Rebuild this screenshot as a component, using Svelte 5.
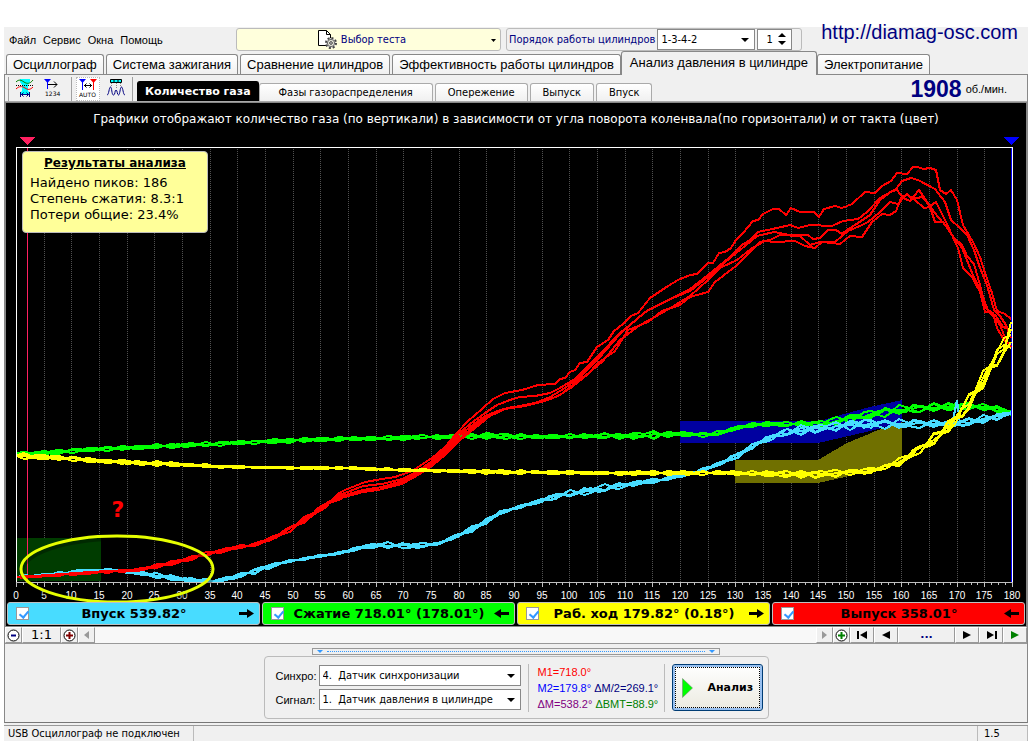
<script>
  let tabs = [
    'Осциллограф',
    'Система зажигания',
    'Сравнение цилиндров',
    'Эффективность работы цилиндров',
    'Анализ давления в цилиндре',
    'Электропитание',
  ];
  let views = ['Количество газа', 'Фазы газораспределения', 'Опережение', 'Выпуск', 'Впуск'];

  let activeTab = $state(4);
  let activeView = $state(0);
  let cylinder = $state(1);

  let strokes = $state([
    { name: 'Впуск 539.82°', color: 'cyan', back: false, on: true },
    { name: 'Сжатие 718.01° (178.01°)', color: 'green', back: true, on: true },
    { name: 'Раб. ход 179.82° (0.18°)', color: 'yellow', back: false, on: true },
    { name: 'Выпуск 358.01°', color: 'red', back: true, on: true },
  ]);

  // plot area inside the svg
  const left = 16;
  const right = 1012;
  const top = 147;
  const bottom = 583;
  const xOf = (deg) => Math.round(left + (deg * (right - left)) / 180);

  const majors = Array.from({ length: 37 }, (_, i) => i * 5);
  const minors = Array.from({ length: 144 }, (_, i) => i * 1.25).filter((d) => d % 5);

  // [x, y, spread] of the middle of each bundle
  const intake = [
    [17, 577, 1], [45, 575, 1], [80, 571, 1], [110, 570, 1], [140, 573, 2], [165, 577, 3],
    [190, 580, 2], [215, 581, 1], [235, 577, 2], [260, 569, 3], [290, 561, 1], [320, 556, 1],
    [345, 552, 1], [367, 546, 2], [385, 545, 3], [420, 546, 3], [440, 543, 1], [455, 537, 2],
    [480, 525, 3], [500, 513, 2], [515, 508, 1], [540, 501, 2], [560, 495, 3], [600, 489, 4],
    [625, 485, 3], [660, 480, 2], [690, 474, 1], [720, 464, 2], [740, 454, 3], [760, 442, 2],
    [780, 434, 3], [800, 430, 5], [830, 427, 4], [860, 424, 5], [900, 424, 5], [930, 424, 4],
    [950, 424, 3], [970, 422, 4], [985, 419, 4], [1000, 416, 3], [1011, 413, 1],
  ];
  const compression = [
    [17, 453, 1], [43, 453, 2], [100, 449, 2], [167, 446, 2], [233, 443, 2], [300, 440, 2],
    [345, 439, 2], [430, 437, 2], [495, 436, 3], [540, 437, 2], [580, 436, 2], [625, 436, 3],
    [650, 435, 4], [680, 434, 2], [708, 435, 2], [720, 433, 2], [740, 427, 2], [765, 424, 2],
    [790, 424, 2], [820, 424, 4], [840, 420, 4], [860, 416, 4], [880, 413, 5], [900, 410, 5],
    [920, 408, 4], [945, 407, 4], [960, 406, 4], [980, 407, 3], [1000, 409, 3], [1011, 413, 2],
  ];
  const power = [
    [17, 456, 3], [60, 458, 2], [100, 461, 2], [167, 464, 2], [233, 467, 1], [300, 468, 1],
    [345, 468, 1], [400, 470, 1], [500, 472, 2], [600, 473, 1], [640, 473, 2], [690, 473, 2],
    [740, 473, 2], [770, 474, 3], [820, 474, 4], [850, 472, 3], [870, 471, 3], [885, 467, 2],
    [900, 462, 4], [915, 452, 4], [930, 443, 6], [945, 430, 6], [957, 418, 6], [970, 401, 8],
    [980, 385, 9], [990, 368, 9], [1000, 352, 10], [1011, 335, 13],
  ];
  const exhaust = [
    [17, 577, 1], [43, 576, 1], [70, 574, 1], [100, 572, 1], [137, 570, 1], [160, 566, 2],
    [180, 561, 2], [207, 554, 2], [233, 548, 2], [253, 545, 2], [273, 538, 2], [290, 529, 3],
    [307, 518, 3], [327, 504, 3], [345, 493, 3],
  ];

  const exhaustTails = [
    '345,490 365,482 382,479 395,477 412,471 432,458 445,447 455,435 468,421 482,409 493,399 505,393 522,390 538,385 555,384 560,379 565,378 570,372 575,370 580,363 587,362 597,347 608,340 614,331 623,324 631,316 638,313 650,298 668,286 678,280 690,275 697,274 708,263 713,263 719,253 725,252 731,248 736,240 743,233 753,221 758,220 763,214 773,209 779,209 786,215 791,208 800,212 814,212 819,217 824,209 835,206 842,208 852,204 865,192 875,193 882,186 891,181 897,173 907,174 913,167 918,167 923,169 930,168 936,170 940,190 946,194 951,190 957,200 963,225 973,242 980,257 985,273 992,293 997,311 1005,314 1011,319',
    '345,493 363,486 382,484 402,479 418,471 432,461 445,449 455,437 470,424 485,413 497,405 510,400 520,397 535,396 550,393 558,389 575,379 598,356 620,333 648,310 665,302 690,289 708,275 730,257 742,245 750,240 758,232 777,228 790,225 798,228 810,225 832,226 843,221 858,219 867,212 880,198 896,189 902,181 911,178 918,180 935,189 945,202 951,220 960,228 967,235 974,250 980,268 987,285 994,310 1000,316 1006,325 1011,338',
    '345,495 363,490 382,487 402,481 418,473 432,463 445,451 457,438 470,427 485,416 500,410 515,407 535,403 550,397 565,388 580,377 600,357 620,334 645,312 668,300 690,291 708,277 730,258 745,246 757,236 774,232 790,235 808,235 813,239 820,238 828,230 836,230 842,234 847,230 855,225 870,215 880,200 892,191 897,190 903,198 910,201 919,190 927,202 938,217 947,227 953,237 962,245 967,256 974,264 980,285 986,308 996,316 1003,327 1011,330',
    '345,496 363,491 378,490 402,483 418,474 432,465 445,453 458,440 472,428 487,417 505,409 525,406 545,401 560,395 575,383 590,372 603,361 620,340 640,325 655,317 672,307 690,296 708,280 720,268 737,260 752,248 765,241 775,242 795,241 805,246 815,248 822,242 840,244 850,236 862,237 872,222 882,214 890,215 896,211 902,196 908,195 915,200 924,208 930,207 935,222 943,222 952,235 958,248 963,268 972,277 980,292 985,312 993,313 997,328 1004,340 1011,346',
    '345,497 363,492 378,490 402,484 418,475 432,466 445,455 460,440 474,429 490,416 507,408 528,405 545,401 558,396 572,387 587,375 598,363 615,351 628,330 648,322 662,311 680,305 690,297 708,292 715,282 736,266 750,252 760,242 770,240 780,235 800,236 810,245 820,242 835,242 848,231 862,225 868,222 880,212 890,202 898,204 907,194 912,199 922,197 930,206 936,202 945,220 952,235 962,248 973,275 980,290 988,310 1000,325 1006,340 1011,347',
  ];

  function yAt(points, x) {
    let i = 1;
    while (i < points.length - 1 && points[i][0] < x) i++;
    const [x0, y0, s0] = points[i - 1];
    const [x1, y1, s1] = points[i];
    const t = (x - x0) / (x1 - x0);
    return [y0 + (y1 - y0) * t, s0 + (s1 - s0) * t];
  }

  function bundle(points) {
    const lines = [];
    const [end, endY, endSpread] = points[points.length - 1];
    for (let k = 0; k < 5; k++) {
      let line = '';
      for (let x = points[0][0]; x < end; x += 7) {
        const [y, spread] = yAt(points, x);
        const wave = Math.sin(x * 0.07 + k * 2.3) * 0.6 + Math.sin(x * 0.31 + k * 4.1) * 0.5;
        line += `${x},${Math.round(y + spread * wave)} `;
      }
      lines.push(line + `${end},${Math.round(endY + (k - 2) * endSpread * 0.5)}`);
    }
    return lines;
  }
</script>

<div class="window">
  <header>
    <nav class="menu">
      <a href="#file">Файл</a>
      <a href="#service">Сервис</a>
      <a href="#windows">Окна</a>
      <a href="#help">Помощь</a>
    </nav>

    <button class="test-select">
      <svg width="20" height="20" viewBox="0 0 20 20">
        <path d="M1.5 1.5h8l4 4v11h-12z" fill="#fff" stroke="#000" />
        <path d="M9.5 1.5v4h4" fill="none" stroke="#000" />
        <circle cx="14" cy="14" r="5" fill="#ddd" stroke="#444" stroke-width="2" stroke-dasharray="2 1.9" />
        <circle cx="14" cy="14" r="3.6" fill="#e4e4d8" stroke="#666" />
        <circle cx="14" cy="14" r="1.3" fill="#fff" stroke="#333" />
      </svg>
      <span>Выбор теста</span>
      <svg class="caret" width="5" height="3" viewBox="0 0 5 3"><path d="M0 0h5L2.5 3z" /></svg>
    </button>

    <div class="order">
      <label for="order">Порядок работы цилиндров</label>
      <div class="select order-select">
        <select id="order"><option>1-3-4-2</option></select>
        <svg width="8" height="4" viewBox="0 0 8 4"><path d="M0 0h8L4 4z" /></svg>
      </div>
      <div class="select spin">
        <input type="number" aria-label="Номер цилиндра" min="1" max="4" bind:value={cylinder} />
        <svg width="8" height="12" viewBox="0 0 8 12"><path d="M0 4h8L4 0zM0 8h8L4 12z" /></svg>
      </div>
    </div>

    <a class="site" href="http://diamag-osc.com">http://diamag-osc.com</a>
  </header>

  <div class="tabs">
    {#each tabs as tab, i}
      <button class:active={i === activeTab} onclick={() => (activeTab = i)}>{tab}</button>
    {/each}
  </div>

  <main>
    <div class="toolbar">
      <div class="tools">
        <button aria-label="Диапазон">
          <svg width="20" height="20" viewBox="0 0 20 20" fill="none">
            <path d="M5 1h10v3l-2 3v6l2 2v1H5v-1l2-2V7L5 4z" fill="#00ffff" />
            <path d="M1 4c3-3 5-2 8 0s6 2 9-2" stroke="#008000" />
            <path d="M1 7.5h17" stroke="#000" stroke-dasharray="1 1" />
            <path d="M1 11c3-3 6-3 9-1s5 2 8-1" stroke="#f00" />
            <path d="M5.5 14v5M14.500 14v5M6 16.5h8M8.500 14.5l-2 2 2 2M11.5 14.5l2 2-2 2" stroke="#000080" />
          </svg>
        </button>
        <button aria-label="Метки по цилиндрам">
          <svg width="20" height="20" viewBox="0 0 20 20" fill="none">
            <path d="M1 1h7L4.5 5z" fill="#00f" />
            <path d="M4.5 3v8" stroke="#00f" />
            <path d="M5 6.5h9M11 3.5l3 3-3 3" stroke="#000" />
            <text x="2" y="18" class="tiny">1234</text>
          </svg>
        </button>
      </div>
      <div class="tools">
        <button class="pressed" aria-label="Автоматическая расстановка">
          <svg width="20" height="20" viewBox="0 0 20 20" fill="none">
            <path d="M1 1h7L4.5 5z" fill="#00f" />
            <path d="M4.5 3v9" stroke="#00f" />
            <path d="M12 1h7l-3.5 4z" fill="#f00" />
            <path d="M15.5 3v9" stroke="#f00" />
            <path d="M6 7.5h8M8.5 5.500l-2 2 2 2M11.5 5.5l2 2-2 2" stroke="#000" />
            <text x="1" y="19" class="tiny">AUTO</text>
          </svg>
        </button>
        <button aria-label="Пики">
          <svg width="20" height="20" viewBox="0 0 20 20" fill="none">
            <path d="M4.5 1.5h11v3h-11z" fill="#0ff" stroke="#000" />
            <path d="M8 2v2M12 2v2" stroke="#000" />
            <path d="M1 17c2 0 2-8 3.500-8s1 8 3 8 1-5 2.500-5 1 5 2.500 5 1.500-8 3-8 1.500 8 3.500 8" stroke="#000080" />
            <path d="M5.5 5v4M10.5 5v6M14.500 5v4" stroke="#888" stroke-dasharray="1 1" />
          </svg>
        </button>
      </div>

      <div class="views">
        {#each views as view, i}
          <button class:active={i === activeView} onclick={() => (activeView = i)}>{view}</button>
        {/each}
      </div>

      <div class="rpm"><b>1908</b> об./мин.</div>
    </div>

    <section class="chart">
      <p class="caption">
        Графики отображают количество газа (по вертикали) в зависимости от угла поворота коленвала(по горизонтали) и от такта (цвет)
      </p>

      <svg class="plot" viewBox="6 135 1020 467" shape-rendering="crispEdges">
        <g class="grid">
          {#each majors.slice(1, -1) as deg}
            <line x1={xOf(deg) + 0.5} x2={xOf(deg) + 0.5} y1={top} y2={bottom} />
          {/each}
        </g>

        <rect x="17" y="538" width="84" height="43" fill="#003c00" />
        <polygon points="680,421 820,421 833,417 870,407 902,400 902,423 870,431 840,438 818,443 680,443" fill="#0000a0" />
        <polygon points="735,460 818,460 847,443 876,431 902,422 902,460 870,470 845,477 818,483 735,483" fill="#707000" />

        <path d="M27.5 147v436" stroke="#ff2060" />
        <path d="M1011 147v436" stroke="#0000ff" />

        <g class="traces">
          {#if strokes[1].on}
            {#each bundle(compression) as points}<polyline {points} stroke="#00ff00" />{/each}
          {/if}
          {#if strokes[0].on}
            {#each bundle(intake) as points}<polyline {points} stroke="#48dcff" />{/each}
            <polyline points="953,420 957,400 960,424" stroke="#48dcff" />
          {/if}
          {#if strokes[3].on}
            {#each bundle(exhaust) as points}<polyline {points} stroke="#ff0000" />{/each}
            {#each exhaustTails as points}<polyline {points} stroke="#ff0000" />{/each}
          {/if}
          {#if strokes[2].on}
            {#each bundle(power) as points}<polyline {points} stroke="#ffff00" />{/each}
          {/if}
        </g>

        <path d="M16.5 583V147.5H1012.5V583" fill="none" stroke="#fff" />
        <path d="M16 582.5H1013" stroke="#c0c0c0" />
        <g class="ticks">
          {#each minors as deg}
            <line x1={xOf(deg) + 0.5} x2={xOf(deg) + 0.5} y1="583" y2="585" />
          {/each}
          {#each majors as deg}
            <line x1={xOf(deg) + 0.5} x2={xOf(deg) + 0.5} y1="583" y2="587" />
            <text x={xOf(deg)} y="599">{deg}</text>
          {/each}
        </g>

        <path d="M19 137h16l-8 8z" fill="#ff2060" />
        <path d="M1003 137h16l-8 8z" fill="#0000ff" />

        <g shape-rendering="auto">
          <ellipse cx="118" cy="572" rx="96" ry="33" fill="none" stroke="#000" stroke-opacity="0.3" stroke-width="4" />
          <ellipse cx="117" cy="569" rx="96" ry="33" fill="none" stroke="#e6ff00" stroke-width="3" />
        </g>
        <text class="question" x="118" y="517">?</text>
      </svg>

      <div class="results">
        <h2>Результаты анализа</h2>
        <div>Найдено пиков: 186</div>
        <div>Степень сжатия: 8.3:1</div>
        <div>Потери общие: 23.4%</div>
      </div>

      <div class="strokes">
        {#each strokes as stroke}
          <label class={stroke.color}>
            <input type="checkbox" bind:checked={stroke.on} />
            <span>{stroke.name}</span>
            <svg width="15" height="9" viewBox="0 0 15 9">
              {#if stroke.back}
                <path d="M0 4.5L7 0v3h8v3H7v3z" />
              {:else}
                <path d="M15 4.5L8 0v3H0v3h8v3z" />
              {/if}
            </svg>
          </label>
        {/each}
      </div>
    </section>

    <div class="scroll">
      <button class="small" aria-label="Уменьшить">
        <svg width="13" height="13" viewBox="0 0 13 13"><circle cx="6.5" cy="6.5" r="5.5" fill="#fff" stroke="#000" /><path d="M4 6.5h5" stroke="#000080" stroke-width="2" /></svg>
      </button>
      <button class="scale">1:1</button>
      <button class="small" aria-label="Увеличить">
        <svg width="13" height="13" viewBox="0 0 13 13"><circle cx="6.5" cy="6.5" r="5.5" fill="#fff" stroke="#000" /><path d="M3 6.5h7M6.5 3v7" stroke="#800000" stroke-width="2" /></svg>
      </button>
      <button class="small" aria-label="Влево">
        <svg width="5" height="8" viewBox="0 0 5 8"><path d="M5 0v8L0 4z" fill="#999" /></svg>
      </button>
      <div class="track"></div>
      <button class="small" aria-label="Вправо">
        <svg width="5" height="8" viewBox="0 0 5 8"><path d="M0 0v8l5-4z" fill="#999" /></svg>
      </button>
      <button class="small" aria-label="Добавить">
        <svg width="13" height="13" viewBox="0 0 13 13"><circle cx="6.5" cy="6.5" r="5.5" fill="#fff" stroke="#000" /><path d="M3 6.5h7M6.5 3v7" stroke="#008000" stroke-width="2" /></svg>
      </button>
      <button class="step" aria-label="В начало">
        <svg width="11" height="8" viewBox="0 0 11 8"><path d="M0 0h2v8H0zM10 0v8L3 4z" /></svg>
      </button>
      <button class="step" aria-label="Назад">
        <svg width="8" height="8" viewBox="0 0 8 8"><path d="M8 0v8L0 4z" /></svg>
      </button>
      <button class="more">...</button>
      <button class="step" aria-label="Вперёд">
        <svg width="8" height="8" viewBox="0 0 8 8"><path d="M0 0v8l8-4z" /></svg>
      </button>
      <button class="step" aria-label="В конец">
        <svg width="11" height="8" viewBox="0 0 11 8"><path d="M9 0h2v8H9zM1 0v8l7-4z" /></svg>
      </button>
      <button class="step" aria-label="Пуск">
        <svg width="8" height="8" viewBox="0 0 8 8"><path d="M0 0v8l8-4z" fill="#008000" /></svg>
      </button>
    </div>

    <div class="bottom">
      <div class="splitter"><i></i><span></span><i></i></div>
      <div class="panel">
        <div class="sources">
          <label for="sync">Синхро:</label>
          <div class="select">
            <select id="sync"><option>4.&nbsp; Датчик синхронизации</option></select>
            <svg width="8" height="4" viewBox="0 0 8 4"><path d="M0 0h8L4 4z" /></svg>
          </div>
          <label for="signal">Сигнал:</label>
          <div class="select">
            <select id="signal"><option>1.&nbsp; Датчик давления в цилиндре</option></select>
            <svg width="8" height="4" viewBox="0 0 8 4"><path d="M0 0h8L4 4z" /></svg>
          </div>
        </div>
        <div class="marks">
          <div><span class="m1">M1=718.0°</span></div>
          <div><span class="m2">M2=179.8°</span> <span class="half">ΔM/2=269.1°</span></div>
          <div><span class="dm">ΔM=538.2°</span> <span class="bmt">ΔВМТ=88.9°</span></div>
        </div>
        <button class="analyse">
          <svg width="11" height="20" viewBox="0 0 11 20"><path d="M0.5 0.5v19l10-9.5z" fill="#00ff00" stroke="#777" stroke-width="0.5" /></svg>
          <span>Анализ</span>
        </button>
      </div>
    </div>
  </main>

  <footer>
    <span>USB Осциллограф не подключен</span>
    <span></span>
    <span>1.5</span>
  </footer>
</div>

<style>
  :global(body) {
    background: #fff;
    font-family: 'DejaVu Sans Condensed', 'DejaVu Sans', Tahoma, sans-serif;
    font-size: 11px;
    color: #000;
  }

  * {
    box-sizing: border-box;
  }

  button,
  select,
  input {
    font: inherit;
    color: inherit;
    margin: 0;
  }

  button {
    padding: 0;
  }

  a {
    color: inherit;
    text-decoration: none;
  }

  .window {
    margin: 27px 4px 0;
    background: #f0f0f0;
  }

  header {
    display: flex;
    align-items: center;
    height: 24px;
  }

  .menu {
    display: flex;
    gap: 7px;
    width: 232px;
    padding: 2px 5px 0;
    font-family: 'Liberation Sans', Arial, sans-serif;
  }

  .test-select {
    display: flex;
    align-items: center;
    justify-content: center;
    gap: 4px;
    position: relative;
    width: 265px;
    height: 23px;
    border: 1px solid #bbb;
    border-radius: 3px;
    background: #ffffdc;
    color: #000080;
    padding-right: 14px;
  }

  .caret {
    position: absolute;
    right: 4px;
    top: 10px;
  }

  .order {
    display: flex;
    align-items: center;
    gap: 2px;
    height: 23px;
    margin-left: 5px;
    padding: 0 9px 0 2px;
    border: 1px solid #bbb;
    border-radius: 3px;
    color: #000080;
  }

  .order-select {
    width: 98px;
  }

  .spin {
    width: 35px;
  }

  .select {
    position: relative;
    color: #000;
  }

  .select select,
  .select input {
    appearance: none;
    display: block;
    width: 100%;
    height: 21px;
    padding: 0 3px;
    border: 1px solid #888;
    border-radius: 0;
    background: #fff;
  }

  .select input {
    padding: 0 0 0 8px;
    appearance: textfield;
  }

  .select input::-webkit-inner-spin-button {
    display: none;
  }

  .select svg {
    position: absolute;
    right: 6px;
    top: 9px;
    pointer-events: none;
  }

  .select.spin svg {
    top: 4px;
  }

  .site {
    margin: -14px 10px 0 auto;
    color: #000080;
    font: 20px 'Liberation Sans', Arial, sans-serif;
  }

  .tabs {
    display: flex;
    align-items: flex-end;
    height: 23px;
    gap: 2px;
    padding-left: 2px;
    font: 13px 'Liberation Sans', Arial, sans-serif;
  }

  .tabs button {
    height: 20px;
    padding: 0 6px;
    border: 1px solid #888;
    border-bottom: 0;
    border-radius: 3px 3px 0 0;
    background: linear-gradient(#fff, #f0f0f0);
    white-space: nowrap;
  }

  .tabs .active {
    position: relative;
    height: 24px;
    margin: 0 -2px -1px;
    padding: 0 8px 3px;
    background: #f0f0f0;
  }

  main {
    border: 1px solid #888;
    border-bottom-color: #777;
  }

  .toolbar {
    display: flex;
    align-items: flex-end;
    height: 27px;
    border-bottom: 1px solid #a8a8a8;
  }

  .tools {
    display: flex;
    gap: 4px;
    height: 24px;
    padding: 0 4px;
    border-left: 1px solid #a0a0a0;
  }

  .tools:first-child {
    margin-left: 3px;
    padding-right: 6px;
  }

  .tools button {
    width: 24px;
    height: 24px;
    border: 0;
    background: none;
  }

  .tools .pressed {
    background: #fff;
    border: 1px dotted #bbb;
  }

  .tiny {
    font: 6px 'DejaVu Sans', sans-serif;
    fill: #000;
  }

  .views {
    display: flex;
    align-items: flex-end;
    gap: 2px;
    padding-left: 4px;
    border-left: 1px solid #a0a0a0;
    height: 24px;
  }

  .views button {
    height: 18px;
    padding: 0 12px;
    border: 1px solid #aaa;
    border-bottom: 0;
    border-radius: 3px 3px 0 0;
    background: linear-gradient(#fff, #f0f0f0);
    white-space: nowrap;
  }

  .views .active {
    height: 20px;
    padding: 0 7px;
    background: #000;
    border-color: #000;
    color: #fff;
    font: bold 11px 'DejaVu Sans', Verdana, sans-serif;
  }

  .views .active + button {
    margin-left: -2px;
    padding: 0 19px;
  }

  .rpm {
    display: flex;
    align-items: center;
    gap: 4px;
    margin: 0 20px 0 auto;
    font-family: 'Liberation Sans', Arial, sans-serif;
  }

  .rpm b {
    font-size: 23px;
    line-height: 24px;
    color: #000080;
  }

  .chart {
    position: relative;
    border: 1px solid #888;
    background: #000;
  }

  .caption {
    height: 32px;
    margin: 0;
    color: #fff;
    text-align: center;
    white-space: nowrap;
    font: 12px/32px 'DejaVu Sans', Verdana, sans-serif;
  }

  .plot {
    display: block;
    width: 100%;
  }

  .grid line {
    stroke: #505050;
    stroke-dasharray: 1 1;
  }

  .traces {
    fill: none;
    stroke-width: 2;
  }

  .ticks line {
    stroke: #c0c0c0;
  }

  .ticks text {
    fill: #fff;
    text-anchor: middle;
    font: 10px 'Liberation Sans', Arial, sans-serif;
  }

  .question {
    fill: #f00;
    text-anchor: middle;
    font: bold 22px 'DejaVu Sans', Verdana, sans-serif;
  }

  .results {
    position: absolute;
    left: 16px;
    top: 48px;
    width: 186px;
    height: 82px;
    padding: 3px 7px;
    border: 1px solid #bbb;
    border-radius: 4px;
    background: #ffff99;
    font: 13px/16px 'DejaVu Sans', Verdana, sans-serif;
    white-space: nowrap;
  }

  .results h2 {
    margin: 0 0 4px;
    text-align: center;
    text-decoration: underline;
    font: bold 12px/16px 'DejaVu Sans', Verdana, sans-serif;
  }

  .strokes {
    display: grid;
    grid-template-columns: repeat(4, 1fr);
    gap: 2px;
    padding: 0 1px 1px;
  }

  .strokes label {
    display: flex;
    align-items: center;
    height: 23px;
    padding: 0 5px 0 8px;
    border: 1px solid #c0c0c0;
    border-radius: 3px;
    font: bold 13px 'DejaVu Sans', Verdana, sans-serif;
    white-space: nowrap;
  }

  .strokes span {
    flex: 1;
    text-align: center;
  }

  .strokes input {
    appearance: none;
    width: 13px;
    height: 13px;
    border: 1px solid #999;
    background: #fff;
  }

  .strokes input:checked::before {
    content: '';
    display: block;
    width: 4px;
    height: 7px;
    margin: 1px 0 0 4px;
    border: solid #3399ff;
    border-width: 0 2px 2px 0;
    transform: rotate(40deg);
  }

  .cyan {
    background: #48dcff;
  }

  .green {
    background: #00ff00;
  }

  .yellow {
    background: #ffff00;
  }

  .red {
    background: #ff0000;
  }

  .scroll {
    display: flex;
    height: 17px;
    border-bottom: 1px solid #999;
  }

  .scroll button {
    display: flex;
    align-items: center;
    justify-content: center;
    border: 1px solid #fff;
    border-right-color: #999;
    border-bottom-color: #999;
    background: #f0f0f0;
  }

  .scroll .small {
    width: 17px;
  }

  .scroll .scale {
    width: 39px;
    font: 13px/14px 'DejaVu Sans', Verdana, sans-serif;
  }

  .scroll .step {
    width: 24px;
  }

  .scroll .more {
    width: 57px;
    color: #000080;
    font: bold 11px/14px 'DejaVu Sans', Verdana, sans-serif;
  }

  .track {
    flex: 1;
    background: #f8f8f8;
  }

  .bottom {
    display: flex;
    flex-direction: column;
    align-items: center;
    gap: 1px;
    padding: 4px 0 3px;
  }

  .splitter {
    display: flex;
    align-items: center;
    gap: 4px;
    width: 408px;
    height: 7px;
    padding: 0 4px;
    border: 1px solid #999;
  }

  .splitter span {
    flex: 1;
    border-top: 1px dotted #3399ff;
  }

  .splitter i {
    border: 3px solid transparent;
    border-top-color: #3399ff;
    border-bottom: 0;
  }

  .panel {
    display: flex;
    align-items: center;
    height: 63px;
    padding: 0 5px 0 11px;
    border: 1px solid #bbb;
    border-radius: 4px;
  }

  .sources {
    display: grid;
    grid-template-columns: 43px 202px;
    gap: 3px 0;
    align-items: center;
  }

  .sources label {
    font-family: 'Liberation Sans', Arial, sans-serif;
  }

  .marks {
    width: 137px;
    margin: 0 7px;
    padding-left: 9px;
    border: solid #bbb;
    border-width: 0 1px;
    font: 11px/16px 'Liberation Sans', Arial, sans-serif;
    white-space: nowrap;
  }

  .m1 {
    color: #f00;
  }

  .m2 {
    color: #00f;
  }

  .half {
    color: #000080;
  }

  .dm {
    color: #800080;
  }

  .bmt {
    color: #008000;
  }

  .analyse {
    display: flex;
    align-items: center;
    gap: 15px;
    width: 91px;
    height: 47px;
    padding-left: 9px;
    border: 1px solid #003c74;
    border-radius: 3px;
    background: linear-gradient(#fff, #ebeae0);
    box-shadow: inset 0 0 0 2px #98c0f0;
    outline: 1px dotted #000;
    outline-offset: -4px;
    font: bold 11px 'DejaVu Sans', Verdana, sans-serif;
  }

  footer {
    display: grid;
    grid-template-columns: 190px 1fr 48px;
    gap: 2px;
    margin-top: 2px;
    height: 16px;
    line-height: 16px;
    border-top: 1px solid #999;
  }

  footer span {
    padding-left: 4px;
    border-right: 1px solid #bbb;
    white-space: nowrap;
  }
</style>
